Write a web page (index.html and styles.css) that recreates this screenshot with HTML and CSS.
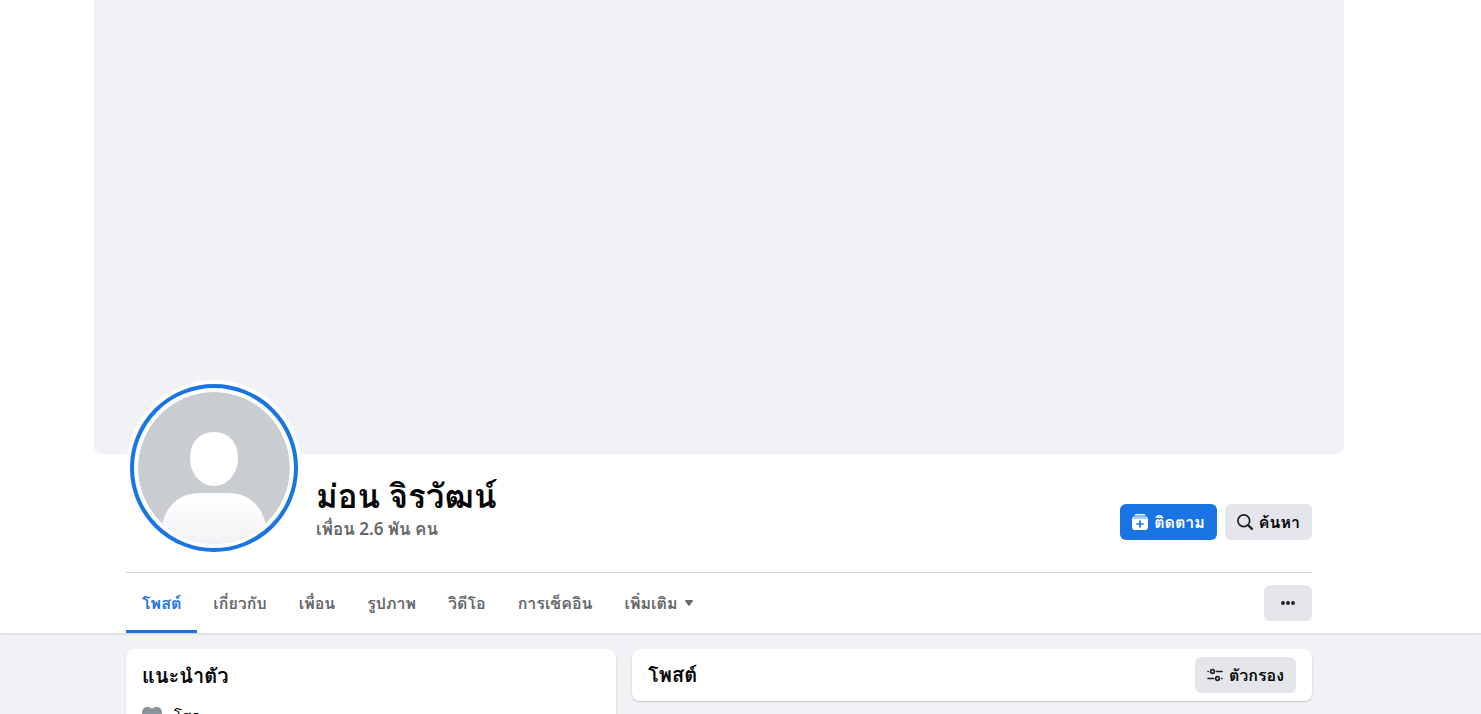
FILE: index.html
```html
<!DOCTYPE html>
<html lang="th">
<head>
    <meta charset="UTF-8">
    <meta name="viewport" content="width=device-width, initial-scale=1">
    <title>ม่อน จิรวัฒน์</title>
    <link rel="stylesheet" href="styles.css">
</head>
<body>
    <header class="top">
        <div class="wrap">
            <div class="cover"></div>
            <div class="inner">
                <div class="profile">
                    <a class="avatar" href="#" aria-label="ม่อน จิรวัฒน์">
                        <svg viewBox="0 0 152 152">
                            <defs>
                                <linearGradient id="body" x1="0" y1="0" x2="0" y2="1">
                                    <stop offset="0.1" stop-color="#fff"/>
                                    <stop offset="1" stop-color="#f1f2f5"/>
                                </linearGradient>
                                <clipPath id="round"><circle cx="76" cy="76" r="76"/></clipPath>
                            </defs>
                            <g clip-path="url(#round)">
                                <rect width="152" height="152" fill="#c9ccd1"/>
                                <path fill="#fff" d="M76 40c15 0 24 11 24 26 0 16-11 28-24 28S52 82 52 66c0-15 9-26 24-26z"/>
                                <path fill="url(#body)" d="M24 133c4-19 17-32 38-32h28c21 0 34 13 38 32v19H24z"/>
                            </g>
                        </svg>
                    </a>
                    <div class="who">
                        <h1>ม่อน จิรวัฒน์</h1>
                        <a class="friends" href="#">เพื่อน 2.6 พัน คน</a>
                    </div>
                    <div class="actions">
                        <button class="btn blue">
                            <svg width="16" height="16" viewBox="0 0 16 16">
                                <path fill="#fff" d="M4.500 0h7a2.500 2.500 0 0 1 2.300 1.400H2.200A2.500 2.500 0 0 1 4.500 0z"/>
                                <path fill="#fff" d="M3 2.400h10a3 3 0 0 1 3 3V13a3 3 0 0 1-3 3H3a3 3 0 0 1-3-3V5.400a3 3 0 0 1 3-3z"/>
                                <path stroke="#1b74e4" stroke-width="0.700" d="M1.500 4h13"/>
                                <path stroke="#1b74e4" stroke-width="1.700" stroke-linecap="round" d="M8 7v6M5 10h6"/>
                            </svg>
                            ติดตาม
                        </button>
                        <button class="btn">
                            <svg width="16" height="16" viewBox="0 0 16 16" fill="none" stroke="#1c1e21" stroke-linecap="round">
                                <circle cx="6.800" cy="6.800" r="5.900" stroke-width="1.700"/>
                                <path stroke-width="2.200" d="M11.500 11.500l3.400 3.400"/>
                            </svg>
                            ค้นหา
                        </button>
                    </div>
                </div>
                <div class="bar">
                    <nav class="tabs">
                        <a class="active" href="#">โพสต์</a>
                        <a href="#">เกี่ยวกับ</a>
                        <a href="#">เพื่อน</a>
                        <a href="#">รูปภาพ</a>
                        <a href="#">วิดีโอ</a>
                        <a href="#">การเช็คอิน</a>
                        <a href="#">เพิ่มเติม
                            <svg width="8" height="6" viewBox="0 0 8 6"><path fill="#65676b" d="M1 0h6q1.500 0 .700 1.200L4.700 5.400q-.700.900-1.400 0L.300 1.200Q-.500 0 1 0z"/></svg>
                        </a>
                    </nav>
                    <button class="btn more" aria-label="เพิ่มเติม">
                        <svg width="14" height="4" viewBox="0 0 14 4" fill="#1c1e21"><circle cx="2" cy="2" r="1.900"/><circle cx="7" cy="2" r="1.900"/><circle cx="12" cy="2" r="1.900"/></svg>
                    </button>
                </div>
            </div>
        </div>
    </header>

    <main class="wrap">
        <div class="inner columns">
            <section class="card intro">
                <h2>แนะนำตัว</h2>
                <div class="fact">
                    <svg width="20" height="18" viewBox="0 0 20 18"><path fill="#8c939d" d="M10 18C5 15 0 11 0 5.500 0 2 2.500 0 5.200 0 7.300 0 9 .500 10 1.700 11 .500 12.700 0 14.800 0 17.500 0 20 2 20 5.500 20 11 15 15 10 18z"/></svg>
                    <span>โสด</span>
                </div>
            </section>
            <section class="card posts">
                <h2>โพสต์</h2>
                <button class="btn">
                    <svg width="16" height="14" viewBox="0 0 16 14" fill="none" stroke="#1c1e21" stroke-width="1.600" stroke-linecap="round">
                        <circle cx="5.500" cy="3.500" r="1.900"/>
                        <path d="M1 3.500h.2M9.500 3.500H15M1 10.500h5.500M15 10.500h-.2"/>
                        <circle cx="10.500" cy="10.500" r="1.900"/>
                    </svg>
                    ตัวกรอง
                </button>
            </section>
        </div>
    </main>
</body>
</html>
```
FILE: styles.css
```css
*{
    margin: 0;
    padding: 0;
    box-sizing: border-box;
}
body{
    height: 100vh;
    overflow: hidden;
    background: #f0f2f5;
    color: #050505;
    font-family: "Noto Sans", Waree, Loma, "Noto Sans Thai", sans-serif;
    font-size: 16px;
    line-height: 20px;
}
a{
    color: inherit;
    text-decoration: none;
}
svg{
    display: block;
    flex: none;
}
.top{
    background: white;
    box-shadow: 0 1px 2px rgba(0, 0, 0, 0.15);
}
.top, main{
    padding-right: 43px;
}
.wrap{
    display: flex;
    flex-direction: column;
    align-items: center;
}
.cover{
    width: 100%;
    max-width: 1250px;
    height: 454px;
    background: #f0f2f5;
    border-radius: 0 0 8px 8px;
}
.inner{
    width: 100%;
    max-width: 1186px;
}
.profile{
    display: flex;
    height: 119px;
    border-bottom: 1px solid #ced0d4;
}
.avatar{
    width: 176px;
    height: 176px;
    margin-top: -74px;
    border-radius: 50%;
    border: 4px solid white;
    background: white;
    flex: none;
}
.avatar svg{
    width: 168px;
    height: 168px;
    padding: 4px;
    border: 4px solid #1b74e4;
    border-radius: 50%;
}
.who{
    flex: 1;
    padding: 22px 0 0 14px;
}
h1{
    font-size: 33px;
    line-height: 40px;
    font-weight: 600;
}
.friends{
    display: block;
    font-size: 17px;
    line-height: 26px;
    font-weight: 600;
    color: #65676b;
}
.actions{
    display: flex;
    gap: 8px;
    padding-top: 50px;
}
.btn{
    display: flex;
    align-items: center;
    justify-content: center;
    gap: 6px;
    height: 36px;
    padding: 0 12px;
    border: none;
    border-radius: 6px;
    background: #e4e6eb;
    color: #050505;
    font: inherit;
    font-weight: 600;
    white-space: nowrap;
    cursor: pointer;
}
.blue{
    background: #1b74e4;
    color: white;
}
.bar{
    display: flex;
    justify-content: space-between;
    align-items: center;
    height: 60px;
}
.tabs{
    display: flex;
    height: 60px;
}
.tabs a{
    display: flex;
    align-items: center;
    gap: 8px;
    padding: 0 16px;
    border-bottom: 3px solid transparent;
    border-top: 3px solid transparent;
    color: #65676b;
    font-weight: 600;
    white-space: nowrap;
}
.tabs .active{
    color: #1b74e4;
    border-bottom-color: #1b74e4;
}
.more{
    width: 48px;
}
.columns{
    display: grid;
    grid-template-columns: 490fr 680fr;
    align-items: start;
    gap: 16px;
    padding-top: 16px;
}
.card{
    background: white;
    border-radius: 8px;
    box-shadow: 0 1px 2px rgba(0, 0, 0, 0.2);
}
h2{
    font-size: 20px;
    line-height: 22px;
    font-weight: 600;
}
.intro{
    padding: 16px;
}
.fact{
    display: flex;
    align-items: center;
    gap: 12px;
    padding-top: 19px;
    font-size: 15px;
}
.posts{
    display: flex;
    align-items: center;
    justify-content: space-between;
    padding: 8px 16px;
}
```
